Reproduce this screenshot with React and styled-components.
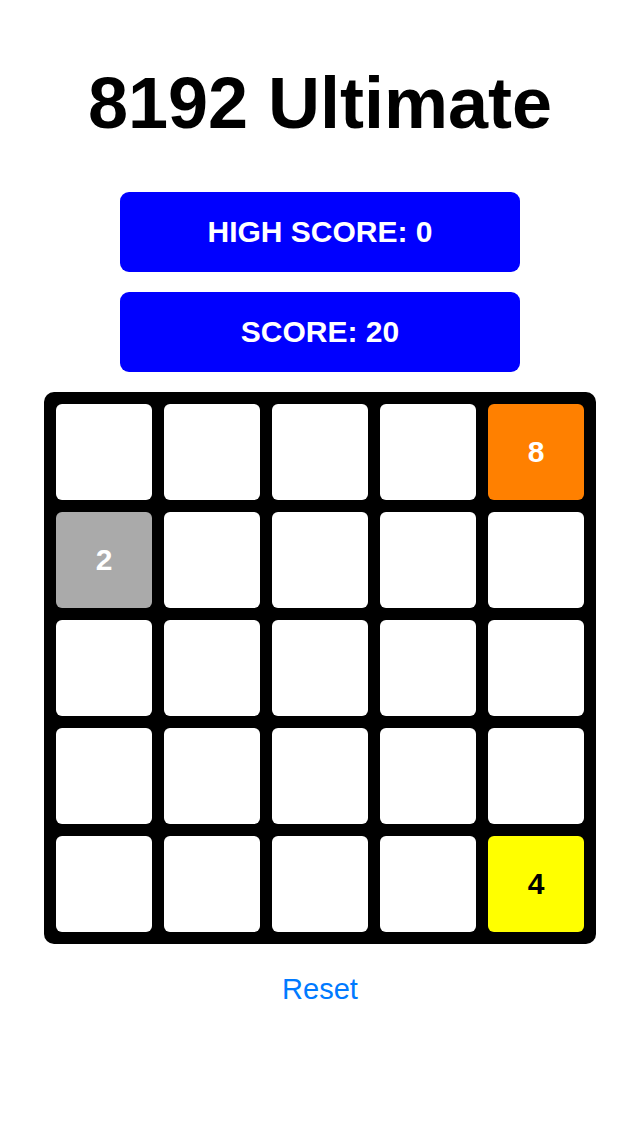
import styled, { createGlobalStyle } from "styled-components";

const GlobalStyle = createGlobalStyle`
  * { margin: 0; padding: 0; box-sizing: border-box; }
  body {
    background: #ffffff;
    font-family: "Liberation Sans", Arial, sans-serif;
  }
`;

const Page = styled.main`
  width: 640px;
  min-height: 1136px;
  display: flex;
  flex-direction: column;
  align-items: center;
  padding-top: 67px;
`;

const Title = styled.h1`
  font-size: 72px;
  line-height: 72px;
  font-weight: 700;
  color: #000;
  margin-bottom: 53px;
`;

const ScoreButton = styled.div`
  width: 400px;
  height: 80px;
  background: #0000ff;
  border-radius: 9px;
  color: #fff;
  font-size: 30px;
  font-weight: 700;
  display: flex;
  align-items: center;
  justify-content: center;
  margin-bottom: ${(p) => p.$gap}px;
`;

const Board = styled.div`
  width: 552px;
  height: 552px;
  background: #000;
  border-radius: 10px;
  padding: 12px;
  display: grid;
  grid-template-columns: repeat(5, 96px);
  grid-template-rows: repeat(5, 96px);
  gap: 12px;
`;

const Tile = styled.div`
  border-radius: 6px;
  background: ${(p) => p.$bg};
  color: ${(p) => p.$fg};
  font-size: 30px;
  font-weight: 700;
  display: flex;
  align-items: center;
  justify-content: center;
`;

const Reset = styled.button`
  margin-top: 31px;
  border: none;
  background: none;
  color: #007aff;
  font-family: "Liberation Sans", Arial, sans-serif;
  font-size: 29px;
  line-height: 29px;
`;

const colors = {
  0: ["#ffffff", "#000"],
  2: ["#aaaaaa", "#fff"],
  4: ["#ffff00", "#000"],
  8: ["#ff8000", "#fff"],
};

const grid = [
  [0, 0, 0, 0, 8],
  [2, 0, 0, 0, 0],
  [0, 0, 0, 0, 0],
  [0, 0, 0, 0, 0],
  [0, 0, 0, 0, 4],
];

export default function App() {
  return (
    <Page>
      <GlobalStyle />
      <Title>8192 Ultimate</Title>
      <ScoreButton $gap={20}>HIGH SCORE: 0</ScoreButton>
      <ScoreButton $gap={20}>SCORE: 20</ScoreButton>
      <Board>
        {grid.flat().map((v, i) => (
          <Tile key={i} $bg={colors[v][0]} $fg={colors[v][1]}>
            {v ? v : ""}
          </Tile>
        ))}
      </Board>
      <Reset>Reset</Reset>
    </Page>
  );
}
